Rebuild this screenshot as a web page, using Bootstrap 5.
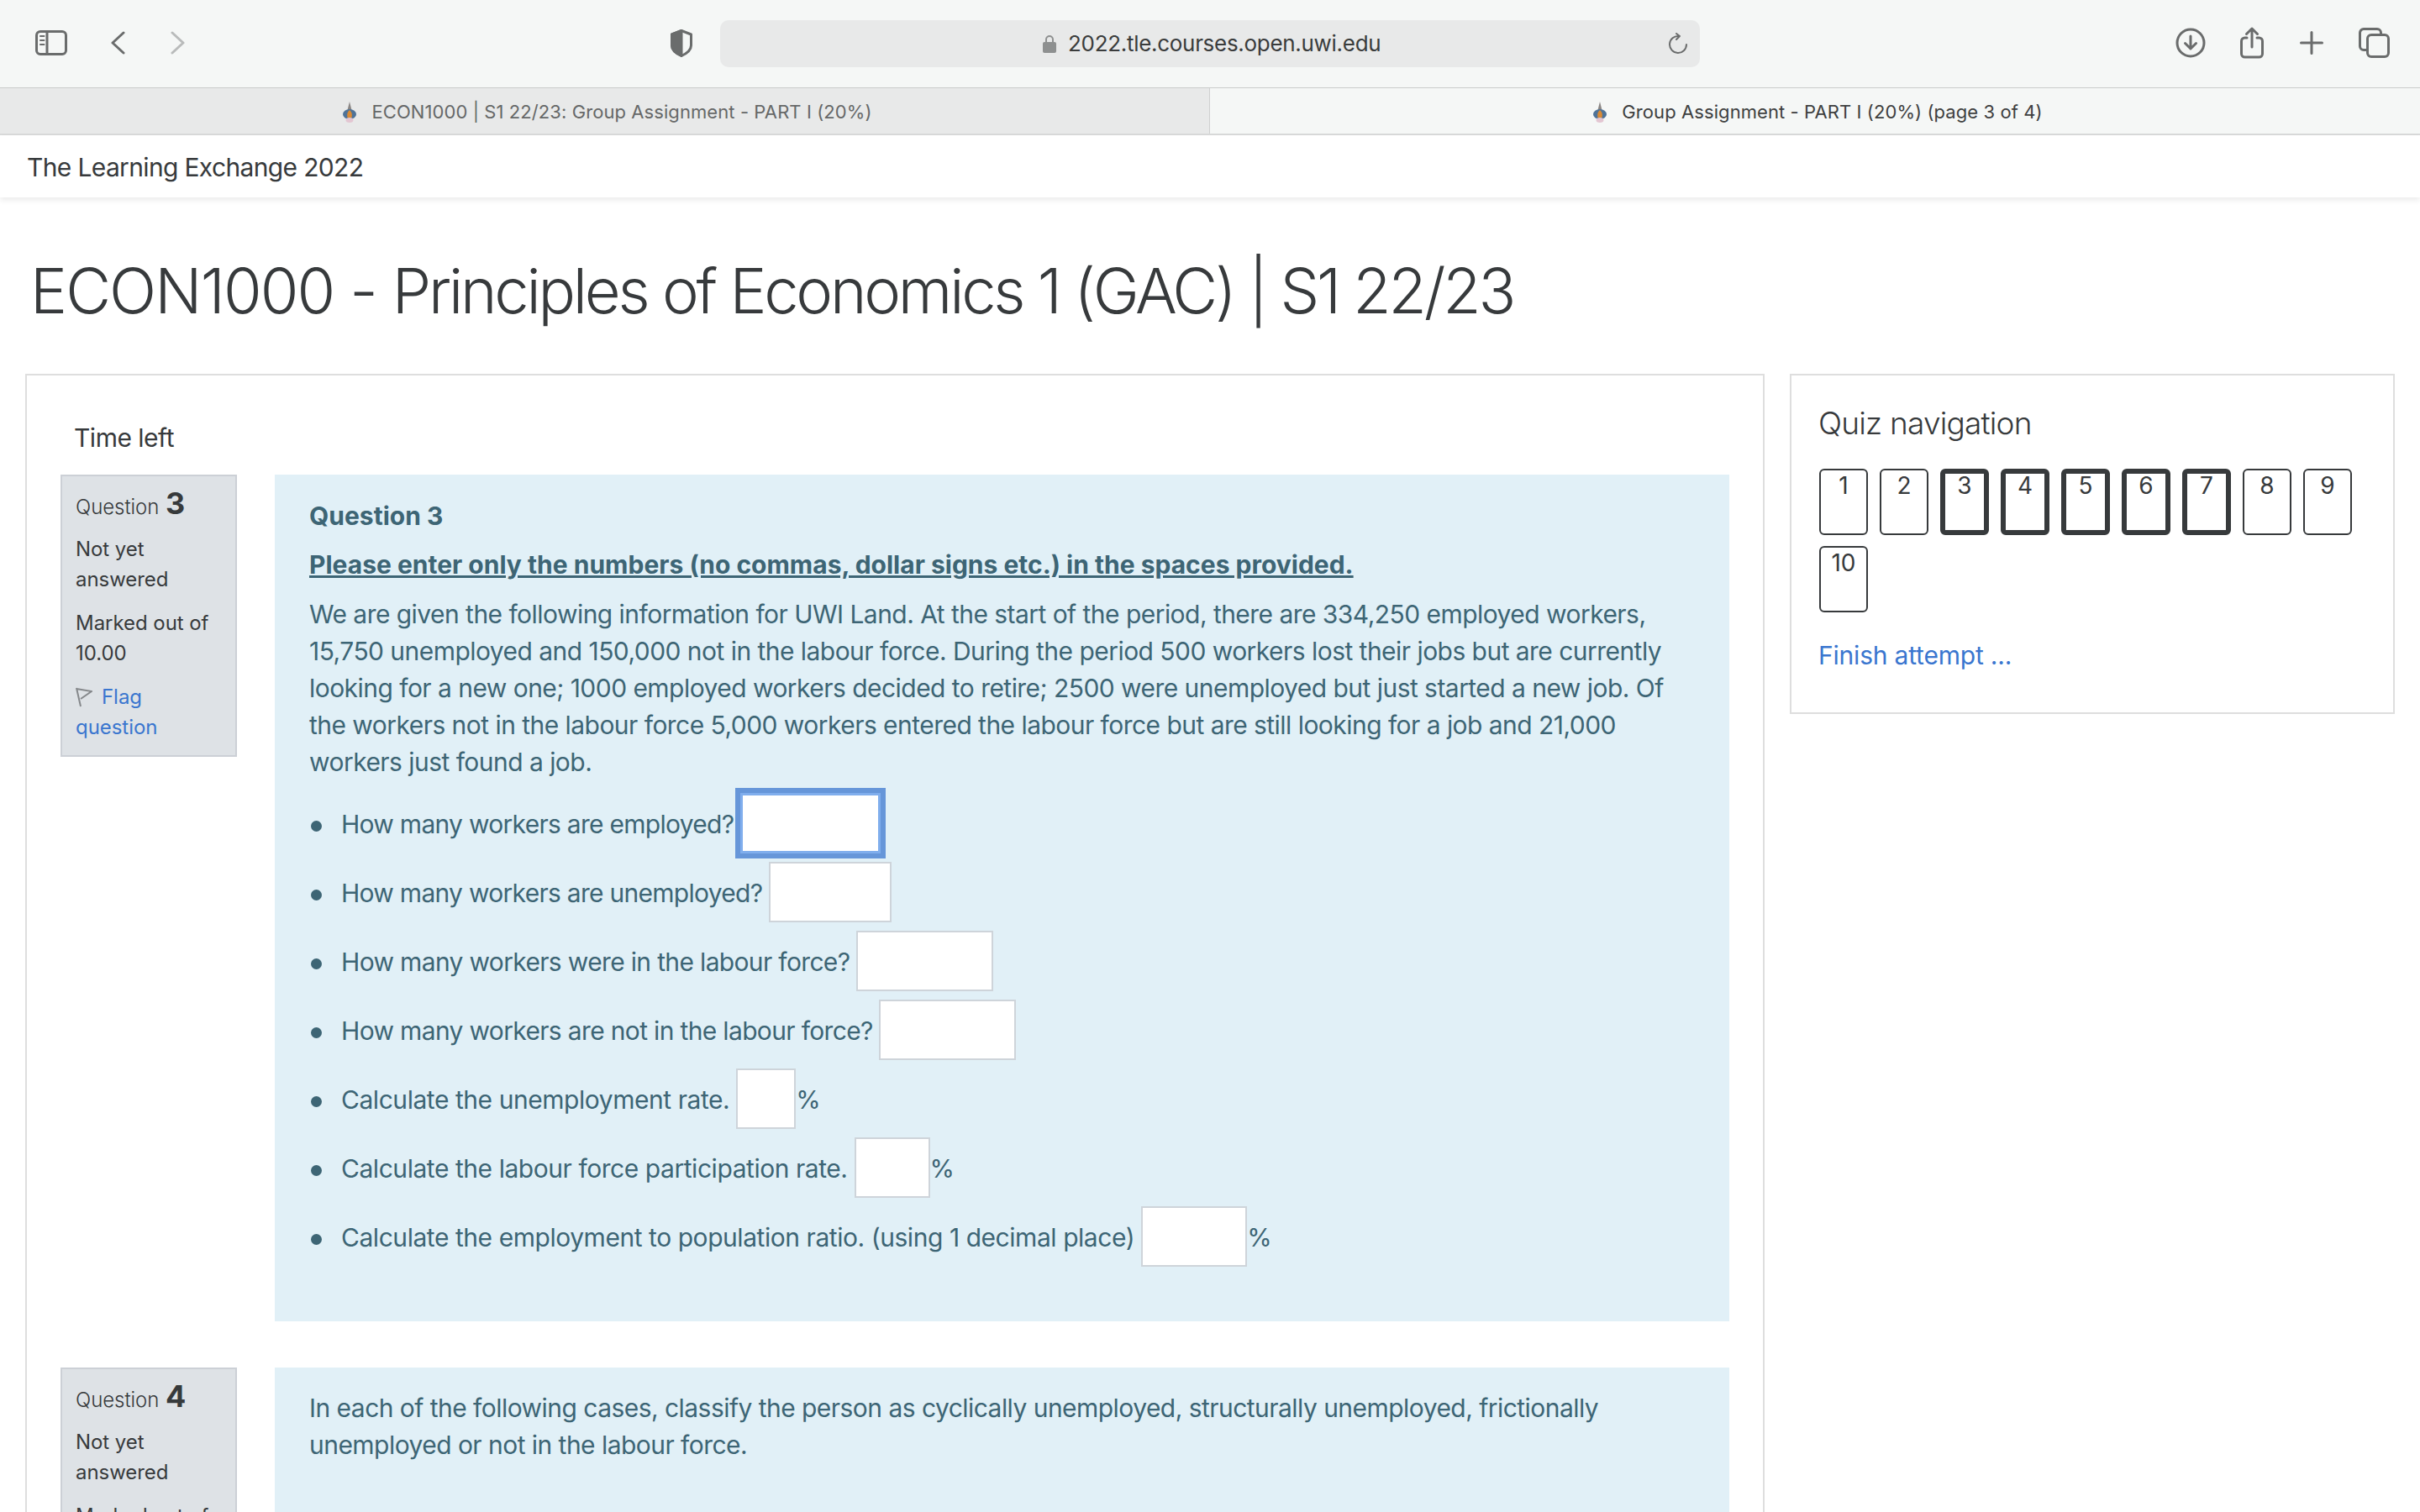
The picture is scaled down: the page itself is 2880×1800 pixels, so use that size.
<!doctype html>
<html lang="en">
<head>
<meta charset="utf-8">
<title>Group Assignment - PART I (20%) (page 3 of 4)</title>
<link rel="stylesheet" href="https://cdn.jsdelivr.net/npm/bootstrap@5.3.0/dist/css/bootstrap.min.css">
<style>
html,body{height:1800px;overflow:hidden}
body{font-family:Inter,"Noto Sans",sans-serif;font-size:30px;line-height:44px;letter-spacing:-.65px;color:#373a3c;background:#fff}
a{color:#3a76cf;text-decoration:none}
.chrome-bar{height:102px;padding-bottom:2px;background:#f5f7f6;border-bottom:1px solid #c9cbcb;box-sizing:content-box}
.chrome-ico{display:block;flex:none;fill:none;stroke:#6a6c6c;stroke-width:3;stroke-linecap:round;stroke-linejoin:round}
.ico-side{margin-left:42px}
.ico-back{margin-left:52px}
.ico-fwd{margin-left:54px;stroke:#b9bbbb}
.ico-shield{margin-left:578px}
.url-field{width:1166px;height:56px;margin:2px 0 0 33px;background:#e8e9e9;border-radius:10px;padding:0 14px 0 383px;font-size:26px;letter-spacing:-.3px;color:#3a3c3c}
.ico-lock{margin-right:13px;fill:#8e9090;stroke:none}
.ico-reload{margin-left:auto;stroke-width:2}
.ico-dl{margin-left:566px}
.ico-share{margin-left:40px}
.ico-plus{margin-left:42px}
.ico-tabs{margin-left:42px}
.tab-strip{height:56px;border-bottom:2px solid #d8d9d9;font-size:22px;letter-spacing:.08px}
.tab-item{width:1440px;height:54px;padding:2px 0 0 6px;background:#f5f7f6;color:#3e4040}
.tab-off{background:#e8e9e9;color:#666868;border-right:1px solid #cfd0d0}
.tab-fav{flex:none;margin-right:17px}
.site-head{height:74px;padding:1px 0 0 32px;background:#fff;box-shadow:0 4px 6px rgba(0,0,0,.07);font-size:30px;color:#373a3c;position:relative}
.page-title{margin:0;padding:69px 0 0 36px;height:210px;font-family:inherit;font-size:74px;line-height:84px;font-weight:300;letter-spacing:-3.25px;color:#373a3c}
.title-lead{letter-spacing:-1.9px}
.page-cols{padding:0 30px;gap:30px;align-items:flex-start}
.main-panel{width:2070px;flex:none;height:1400px;border:2px solid #dedede;padding:52px 40px 0}
.time-left{padding-left:16px;height:66px;line-height:44px;letter-spacing:-.5px}
.side-panel{width:720px;flex:none;height:405px;border:2px solid #dedede;padding:32px 32px 32px 33px}
.side-title{font-size:37px;line-height:50px;font-weight:300;letter-spacing:-.8px;margin:0 0 29px -1px;color:#373a3c}
.nav-grid{display:flex;flex-wrap:wrap;gap:13px 14px}
.nav-cell{width:58px;height:79px;border:2px solid #373a3c;border-radius:6px;text-align:center;font-size:28px;line-height:36px;letter-spacing:0;color:#373a3c}
.nav-now{border-width:6px;line-height:28px}
.finish-link{display:block;margin:29px 0 0 -1px;font-size:30px;letter-spacing:-.2px}
.q-wrap{gap:45px;align-items:flex-start;margin-bottom:55px}
.q-info{width:210px;flex:none;background:#dee2e6;border:2px solid #ccd0d6;padding:14px 16px 15px;font-size:24px;line-height:36px;letter-spacing:-.05px;color:#373a3c}
.q-no{font-weight:300;line-height:36px;margin-bottom:14px}
.q-no b{font-size:36px;font-weight:700;margin-left:1px}
.q-state{margin-bottom:16px}
.q-flag-ico{fill:none;stroke:#85888b;stroke-width:2;vertical-align:-4px;margin-right:11px}
.q-body{flex:1;background:#e1f0f7;color:#3d6575;padding:27px 41px 0}
.q-h{font-size:30px;line-height:44px;font-weight:700;letter-spacing:0;margin:0 0 14px;color:#3d6575}
.q-note{font-weight:700;letter-spacing:0;text-decoration:underline;margin:0 0 15px}
.q-text{margin:0 0 16px;letter-spacing:-.54px}
.q-list{margin:0 0 64px;padding-left:38px;list-style:none}
.q-list li{line-height:72px;margin-bottom:10px;letter-spacing:-.72px}
.q-list li.q-wide{letter-spacing:-.66px}
.q-list li.q-calc{letter-spacing:-.45px}
.q-list li::before{content:"";display:inline-block;width:13px;height:13px;border-radius:50%;background:#3d6575;margin-left:-36px;margin-right:23px;vertical-align:middle}
.q-input{display:inline-block;height:72px;padding:0;border:2px solid #ced4da;border-radius:0;background:#fff;vertical-align:middle;box-sizing:border-box;margin-top:-8px}
.w1{width:167px;border:3px solid #80aeed;box-shadow:0 0 0 6px #6696d9}
.w2{width:146px}.w3{width:163px}.w5{width:71px}.w6{width:90px}.w7{width:126px}
.q-tall{height:800px;padding-top:26px}
</style>
</head>
<body>
<div class="chrome-bar d-flex align-items-center">
  <svg class="chrome-ico ico-side" width="38" height="30" viewBox="0 0 38 30"><rect x="1.5" y="1.5" width="35" height="27" rx="4.5"/><path d="M14 2v26"/><path d="M6 7h4.5M6 12h4.5M6 17h4.5" stroke-width="2"/></svg>
  <svg class="chrome-ico ico-back" width="17" height="28" viewBox="0 0 17 28"><path d="M15 2 2 14l13 12"/></svg>
  <svg class="chrome-ico ico-fwd" width="17" height="28" viewBox="0 0 17 28"><path d="M2 2l13 12L2 26"/></svg>
  <svg class="chrome-ico ico-shield" width="26" height="33" viewBox="0 0 26 33"><path d="M13 1.5 24.5 6v13c0 6-6 10-11.500 12.500C7.500 29 1.500 25 1.500 19V6z"/><path d="M13 1.500 1.500 6v13c0 6 6 10 11.500 12.500z" fill="#6a6c6c"/></svg>
  <div class="url-field d-flex align-items-center">
    <svg class="chrome-ico ico-lock" width="18" height="24" viewBox="0 0 18 24"><path d="M4 10V7a5 5 0 0 1 10 0v3h-2V7a3 3 0 0 0-6 0v3z"/><rect x="1" y="10" width="16" height="13" rx="2"/></svg>
    <span>2022.tle.courses.open.uwi.edu</span>
    <svg class="chrome-ico ico-reload" width="23" height="26" viewBox="0 0 23 26"><path d="M12 4a10 10 0 1 0 9 10"/><path d="M9 1l4 3-4 4"/></svg>
  </div>
  <svg class="chrome-ico ico-dl" width="36" height="36" viewBox="0 0 36 36"><circle cx="18" cy="18" r="16"/><path d="M18 10v15M11.500 18.500 18 25l6.500-6.500"/></svg>
  <svg class="chrome-ico ico-share" width="30" height="38" viewBox="0 0 30 38"><path d="M9 13H6.500A4 4 0 0 0 2.500 17v15a4 4 0 0 0 4 4h17a4 4 0 0 0 4-4V17a4 4 0 0 0-4-4H21"/><path d="M15 24V2M8.500 8.500 15 2l6.500 6.500"/></svg>
  <svg class="chrome-ico ico-plus" width="28" height="28" viewBox="0 0 28 28"><path d="M14 1.500v25M1.500 14h25"/></svg>
  <svg class="chrome-ico ico-tabs" width="37" height="36" viewBox="0 0 37 36"><rect x="10.500" y="8.500" width="25" height="26" rx="4.500"/><path d="M26.500 8.500V6a4.500 4.500 0 0 0-4.500-4.500H6A4.500 4.500 0 0 0 1.500 6v16A4.500 4.500 0 0 0 6 26.500h4.500"/></svg>
</div>
<div class="tab-strip d-flex">
  <div class="tab-item tab-off d-flex align-items-center justify-content-center">
    <svg class="tab-fav" width="18" height="25" viewBox="0 0 18 25"><path d="M9 0l2.500 10h-5z" fill="#8a8684"/><ellipse cx="9" cy="15" rx="8" ry="6" fill="#4f7398"/><path d="M9 10c2.500 2 3.500 5 2.500 9h-5C5.500 15 6.500 12 9 10z" fill="#d98a35"/><ellipse cx="9" cy="22" rx="4.500" ry="3" fill="#e3c6d2"/></svg>
    <span>ECON1000 | S1 22/23: Group Assignment - PART I (20%)</span>
  </div>
  <div class="tab-item d-flex align-items-center justify-content-center">
    <svg class="tab-fav" width="18" height="25" viewBox="0 0 18 25"><path d="M9 0l2.500 10h-5z" fill="#8a8684"/><ellipse cx="9" cy="15" rx="8" ry="6" fill="#4f7398"/><path d="M9 10c2.500 2 3.500 5 2.500 9h-5C5.500 15 6.500 12 9 10z" fill="#d98a35"/><ellipse cx="9" cy="22" rx="4.500" ry="3" fill="#e3c6d2"/></svg>
    <span>Group Assignment - PART I (20%) (page 3 of 4)</span>
  </div>
</div>
<header class="site-head d-flex align-items-center">The Learning Exchange 2022</header>
<h1 class="page-title"><span class="title-lead">ECON1000 - </span>Principles of Economics 1 (GAC) | S1 22/23</h1>
<div class="page-cols d-flex">
  <main class="main-panel">
    <div class="time-left">Time left</div>
    <section class="q-wrap d-flex">
      <div class="q-info">
        <div class="q-no">Question <b>3</b></div>
        <div class="q-state">Not yet answered</div>
        <div class="q-state">Marked out of 10.00</div>
        <div><svg class="q-flag-ico" width="20" height="24" viewBox="0 0 20 24"><path d="M1 1l5 22M1 2l18 3-13 9"/></svg><a href="#">Flag question</a></div>
      </div>
      <div class="q-body">
        <h4 class="q-h">Question 3</h4>
        <p class="q-note">Please enter only the numbers (no commas, dollar signs etc.) in the spaces provided.</p>
        <p class="q-text">We are given the following information for UWI Land. At the start of the period, there are 334,250 employed workers, 15,750 unemployed and 150,000 not in the labour force. During the period 500 workers lost their jobs but are currently looking for a new one; 1000 employed workers decided to retire; 2500 were unemployed but just started a new job. Of the workers not in the labour force 5,000 workers entered the labour force but are still looking for a job and 21,000 workers just found a job.</p>
        <ul class="q-list">
          <li>How many workers are employed? <input class="q-input w1" type="text" aria-label="employed"></li>
          <li>How many workers are unemployed? <input class="q-input w2" type="text" aria-label="unemployed"></li>
          <li class="q-wide">How many workers were in the labour force? <input class="q-input w3" type="text" aria-label="labour force"></li>
          <li class="q-wide">How many workers are not in the labour force? <input class="q-input w3" type="text" aria-label="not in labour force"></li>
          <li class="q-calc">Calculate the unemployment rate. <input class="q-input w5" type="text" aria-label="unemployment rate">%</li>
          <li class="q-calc">Calculate the labour force participation rate. <input class="q-input w6" type="text" aria-label="participation rate">%</li>
          <li class="q-calc">Calculate the employment to population ratio. (using 1 decimal place) <input class="q-input w7" type="text" aria-label="ratio">%</li>
        </ul>
      </div>
    </section>
    <section class="q-wrap d-flex">
      <div class="q-info">
        <div class="q-no">Question <b>4</b></div>
        <div class="q-state">Not yet answered</div>
        <div class="q-state">Marked out of 10.00</div>
      </div>
      <div class="q-body q-tall">
        <p class="q-text">In each of the following cases, classify the person as cyclically unemployed, structurally unemployed, frictionally unemployed or not in the labour force.</p>
      </div>
    </section>
  </main>
  <aside class="side-panel">
    <h5 class="side-title">Quiz navigation</h5>
    <div class="nav-grid">
      <div class="nav-cell">1</div><div class="nav-cell">2</div><div class="nav-cell nav-now">3</div><div class="nav-cell nav-now">4</div><div class="nav-cell nav-now">5</div><div class="nav-cell nav-now">6</div><div class="nav-cell nav-now">7</div><div class="nav-cell">8</div><div class="nav-cell">9</div><div class="nav-cell">10</div>
    </div>
    <a class="finish-link" href="#">Finish attempt ...</a>
  </aside>
</div>
</body>
</html>
